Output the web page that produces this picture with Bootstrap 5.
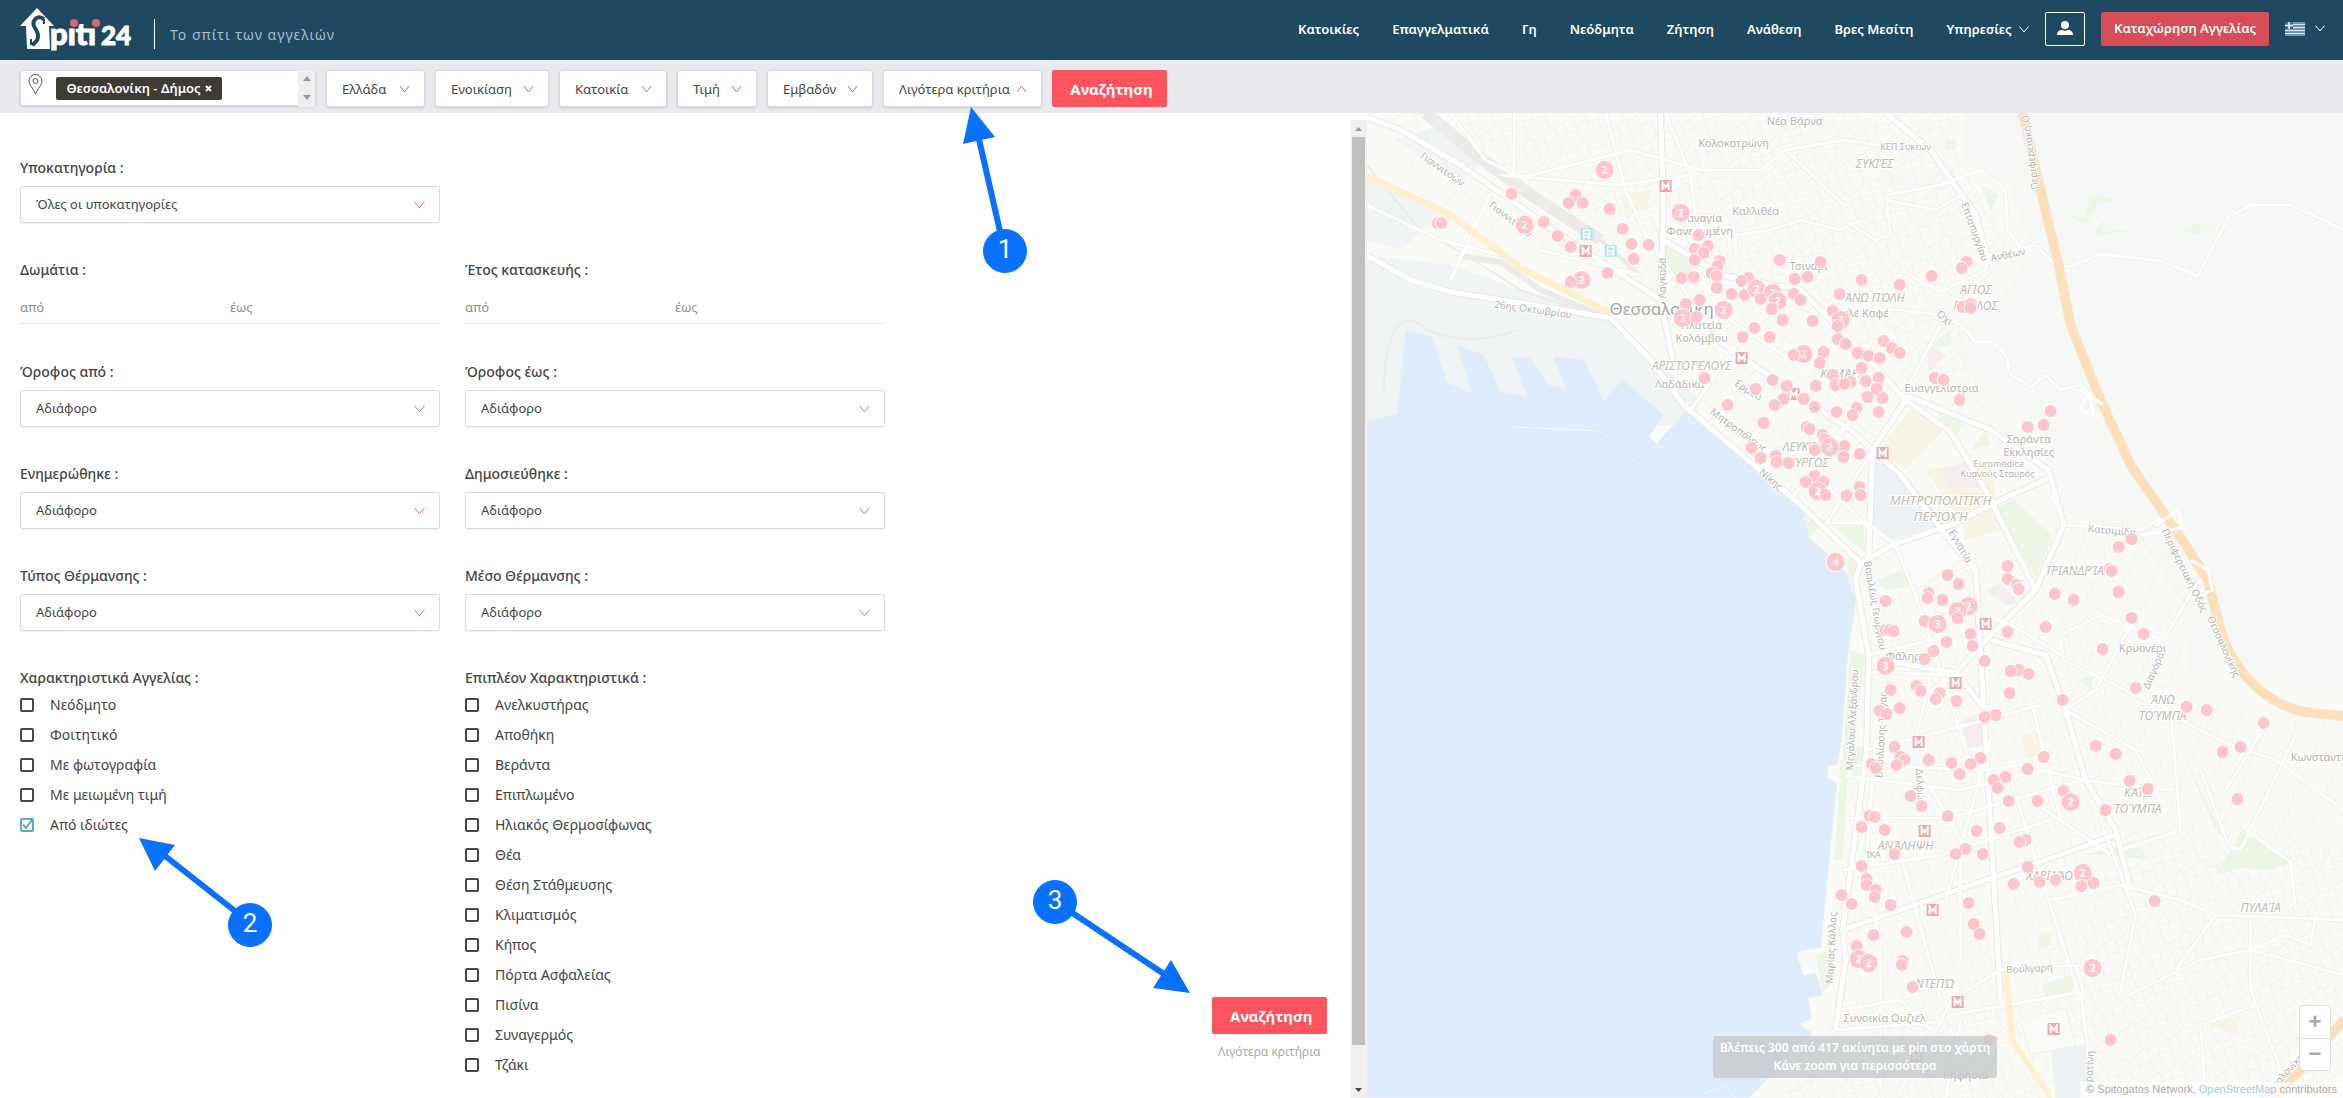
<!DOCTYPE html>
<html lang="el">
<head>
<meta charset="utf-8">
<meta name="viewport" content="width=device-width, initial-scale=1">
<title>Spiti24 - Το σπίτι των αγγελιών</title>
<link href="https://cdn.jsdelivr.net/npm/bootstrap@5.3.0/dist/css/bootstrap.min.css" rel="stylesheet">
<style>
body{font-family:"Noto Sans","Open Sans",sans-serif;font-size:13px;line-height:20px;color:#444;min-height:100vh}
.topbar{background:#1e4961;height:60px;padding:0 18px 0 20px}
.brand-logo{width:114px;height:60px;flex:none}
.tagline{border-left:1px solid #fff;height:30px;margin:8px 0 0 20px;padding:6px 0 0 15px;color:#a9bfce;font-size:14px;letter-spacing:1px}
.topnav{gap:33px}
.top-actions{padding-bottom:3px}
.topnav a{color:#fff;text-decoration:none;font-weight:600;white-space:nowrap}
.user-btn{width:40px;height:34px;border:1px solid #fff;border-radius:2px;padding:0;line-height:0}
.post-btn{height:34px;width:168px;padding:0;border-radius:2px;background:#d64d57;color:#fff;font-size:13px;font-weight:600}
.lang-btn{gap:10px}
.searchbar{background:#e9eaef;height:53px;padding:10px 20px 0;gap:10px}
.place-box{width:296px;height:36px;background:#fff;border:1px solid #d9dade;border-radius:3px;box-shadow:0 1px 3px #0002;padding-left:7px}
.place-chip{background:#3e3a36;color:#fff;border-radius:2px;height:23px;width:166px;font-weight:600;margin-left:13px}
.place-chip button{background:none;border:0;color:#fff;padding:0;font-size:12px;font-weight:700}
.place-spin{width:17px;height:37px;background:#f0f0f0}
.pill{height:37px;background:#fff;border:1px solid #d9dade;border-radius:3px;box-shadow:0 1px 3px #0002;color:#444;padding:0 14px 0 15px;white-space:nowrap}
.w-a{width:99px}.w-b{width:114px}.w-c{width:108px}.w-d{width:80px}.w-e{width:106px}.w-f{width:159px}
.go-btn{width:115px;height:37px;border:0;border-radius:2px;background:#ff545e;color:#fff;font-size:15px;font-weight:700;padding:0 0 0 4px}
.filters{padding:45px 24px 12px 20px}
.fcols{width:865px;column-gap:25px}
.fcol{width:420px}
.fgroup{height:102px}
.fgroup label,.fhead,.fgroup legend{font-size:14px;font-weight:500;line-height:20px;display:block;margin:0 0 8px;color:#444}
.fgroup .form-select{height:37px;font-size:13px;color:#444;border:1px solid #d9d9d9;border-radius:3px;padding:0 40px 0 15px;box-shadow:0 1px 2px #00000010;
 background-image:url("data:image/svg+xml,%3Csvg xmlns='http://www.w3.org/2000/svg' viewBox='0 0 11 8'%3E%3Cpath d='M.5.8 5.5 6.8 10.5.8' fill='none' stroke='%23de7280'/%3E%3C/svg%3E");background-size:11px 8px;background-position:right 14px center}
.range{border-bottom:1px solid #e4e4e4;height:36px}
.range input{border:0;width:50%;padding:3px 0 0;font-size:13px;color:#555;outline:0}
.range input::placeholder{color:#8a9190;opacity:1}
.fhead.fhead{margin:0 0 2px}
.tick{height:30px;gap:16px;padding:0;margin:0;min-height:0;font-size:14px}
.tick .form-check-input{width:14px;height:14px;margin:0;float:none;border:2px solid #484848;border-radius:2px;flex:none}
.tick .form-check-input:checked{background-color:#fff;border-color:#5ea9c6;background-size:12px;
 background-image:url("data:image/svg+xml,%3Csvg xmlns='http://www.w3.org/2000/svg' viewBox='0 0 12 12'%3E%3Cpath d='M2 5.5 5 9 11 1' fill='none' stroke='%235ea9c6' stroke-width='2'/%3E%3C/svg%3E")}
.less-link{color:#aaa;text-decoration:none;font-size:12px}
.rail{width:16px;background:#f0f0f0;margin-top:7px}
.rail-thumb{background:#c1c1c1;width:13px;flex:0 1 908px}
.rail svg{flex:none}
.map-side{min-height:980px;overflow:hidden;background:#fafaf7}
.map-svg{position:absolute;inset:0;width:100%;height:100%}
.map-note{position:absolute;right:346px;bottom:20px;width:284px;background:#c6c9cbcc;color:#fff;border-radius:3px;text-align:center;font-size:12px;font-weight:600;line-height:18px;padding:3px 0;white-space:nowrap}
.map-zoom{position:absolute;right:12px;bottom:27px;width:32px;height:66px;border:1px solid #ddd;border-radius:4px;background:#fff}
.map-zoom button{border:0;background:#fff;color:#aaa;font:700 22px/30px "Liberation Sans",sans-serif;flex:1;padding:0;border-radius:4px}
.map-zoom button+button{border-top:1px solid #ddd;border-radius:0 0 4px 4px}
.map-credit{position:absolute;right:0;bottom:0;background:#ffffffb3;color:#aaa;font-family:"Liberation Sans",sans-serif;font-size:11px;line-height:15px;padding:0 6px 1px}
.map-credit a{color:#9fcfe3;text-decoration:none}
.guide{position:absolute;left:0;top:0;width:1400px;height:1098px;pointer-events:none;z-index:5}
</style>
</head>
<body class="d-flex flex-column position-relative">
<header class="topbar d-flex align-items-center">
 <a href="#" class="brand-logo" aria-label="Spiti24">
 <svg width="114" height="60" viewBox="20 0 114 60">
  <path d="M20 26 37 8 54 26H49L50 49H27L26 26Z" fill="#fff"/>
  <path d="M44 19C36 14 31 22 35 28C39 34 40 40 32 45" fill="none" stroke="#1e4961" stroke-width="4"/>
  <path d="M44 19V24M31 39V45" stroke="#1e4961" stroke-width="2"/>
  <g fill="#fff" stroke="#fff" stroke-width="1" font-family="Lato" font-weight="900">
   <text x="50" y="45" font-size="31">pıtı</text><text x="101" y="45" font-size="26">24</text></g>
  <circle cx="74" cy="23" r="4" fill="#dc6672"/><circle cx="96" cy="23" r="4" fill="#dc6672"/>
 </svg></a>
 <div class="tagline">Το σπίτι των αγγελιών</div>
 <div class="top-actions d-flex align-items-center ms-auto">
 <nav class="topnav d-flex align-items-center">
  <a href="#">Κατοικίες</a><a href="#">Επαγγελματικά</a><a href="#">Γη</a><a href="#">Νεόδμητα</a><a href="#">Ζήτηση</a><a href="#">Ανάθεση</a><a href="#">Βρες Μεσίτη</a>
  <a href="#">Υπηρεσίες <svg class="ms-1" width="10" height="7" viewBox="0 0 10 7"><path d="M.5.5 5 6 9.500.5" fill="none" stroke="#fff"/></svg></a>
 </nav>
 <button class="btn user-btn ms-3" aria-label="Λογαριασμός"><svg width="16" height="15" viewBox="0 0 16 15" fill="#fff"><ellipse cx="8" cy="4" rx="4" ry="4"/><path d="M0 14C0 10 3 9 5 9C7 10 9 10 11 9C14 9 16 11 16 14Z"/></svg></button>
 <button class="btn post-btn ms-3">Καταχώρηση Αγγελίας</button>
 <button class="btn p-0 ms-3 border-0 d-flex align-items-center lang-btn" aria-label="Ελληνικά">
  <svg width="20" height="14" viewBox="0 0 20 14"><path fill="#dfe9f3" d="M0 0h20v14H0z"/><path d="M0 1h20M0 4h20M0 7h20M0 10h20M0 13h20" stroke="#4a77ae" stroke-width="1.500"/><path fill="#3566a4" d="M0 0h8v7H0z"/><path d="M4 0v7M0 3.500h8" stroke="#fff" stroke-width="1.500"/></svg>
  <svg width="10" height="7" viewBox="0 0 10 7"><path d="M.5.5 5 6 9.500.5" fill="none" stroke="#fff"/></svg>
 </button>
 </div>
</header>

<section class="searchbar d-flex">
 <div class="place-box d-flex align-items-center">
  <svg width="15" height="21" viewBox="0 0 15 21" class="mb-2"><path d="M7.500 20C5 14 1 11 1 7a6.500 6.500 0 0 1 13 0C14 11 10 14 7.500 20Z" fill="none" stroke="#555"/><circle cx="7.500" cy="7" r="2.500" fill="none" stroke="#555"/></svg>
  <span class="place-chip d-inline-flex align-items-center justify-content-center gap-1">Θεσσαλονίκη - Δήμος <button aria-label="Αφαίρεση"><svg width="7" height="7" viewBox="0 0 7 7"><path d="M1 1 6 6M6 1 1 6" stroke="#fff" stroke-width="2"/></svg></button></span>
  <span class="place-spin ms-auto d-flex flex-column justify-content-around align-items-center"><svg width="8" height="5"><path d="M0 5 4 0 8 5Z" fill="#999"/></svg><svg width="8" height="5"><path d="M0 0 4 5 8 0Z" fill="#999"/></svg></span>
 </div>
 <button class="pill w-a d-flex align-items-center justify-content-between">Ελλάδα <svg width="11" height="8"><path d="M1 1 5.500 7 10 1" fill="none" stroke="#e2606c"/></svg></button>
 <button class="pill w-b d-flex align-items-center justify-content-between">Ενοικίαση <svg width="11" height="8"><path d="M1 1 5.500 7 10 1" fill="none" stroke="#e2606c"/></svg></button>
 <button class="pill w-c d-flex align-items-center justify-content-between">Κατοικία <svg width="11" height="8"><path d="M1 1 5.500 7 10 1" fill="none" stroke="#e2606c"/></svg></button>
 <button class="pill w-d d-flex align-items-center justify-content-between">Τιμή <svg width="11" height="8"><path d="M1 1 5.500 7 10 1" fill="none" stroke="#e2606c"/></svg></button>
 <button class="pill w-e d-flex align-items-center justify-content-between">Εμβαδόν <svg width="11" height="8"><path d="M1 1 5.500 7 10 1" fill="none" stroke="#e2606c"/></svg></button>
 <button class="pill w-f d-flex align-items-center justify-content-between">Λιγότερα κριτήρια <svg width="11" height="8"><path d="M1 7 5.500 1 10 7" fill="none" stroke="#e2606c"/></svg></button>
 <button class="go-btn">Αναζήτηση</button>
</section>

<main class="row g-0 flex-grow-1">
 <div class="col-7 d-flex">
  <form class="filters d-flex flex-grow-1" onsubmit="return false">
   <div class="fcols d-flex flex-wrap align-content-start">
    <div class="fgroup w-100"><div class="fcol"><label for="s0">Υποκατηγορία :</label><select id="s0" class="form-select"><option>Όλες οι υποκατηγορίες</option></select></div></div>
    <fieldset class="fgroup fcol"><legend>Δωμάτια :</legend><div class="range d-flex"><input placeholder="από" aria-label="Δωμάτια από"><input placeholder="έως" aria-label="Δωμάτια έως"></div></fieldset>
    <fieldset class="fgroup fcol"><legend>Έτος κατασκευής :</legend><div class="range d-flex"><input placeholder="από" aria-label="Έτος από"><input placeholder="έως" aria-label="Έτος έως"></div></fieldset>
    <div class="fgroup fcol"><label for="s1">Όροφος από :</label><select id="s1" class="form-select"><option>Αδιάφορο</option></select></div>
    <div class="fgroup fcol"><label for="s2">Όροφος έως :</label><select id="s2" class="form-select"><option>Αδιάφορο</option></select></div>
    <div class="fgroup fcol"><label for="s3">Ενημερώθηκε :</label><select id="s3" class="form-select"><option>Αδιάφορο</option></select></div>
    <div class="fgroup fcol"><label for="s4">Δημοσιεύθηκε :</label><select id="s4" class="form-select"><option>Αδιάφορο</option></select></div>
    <div class="fgroup fcol"><label for="s5">Τύπος Θέρμανσης :</label><select id="s5" class="form-select"><option>Αδιάφορο</option></select></div>
    <div class="fgroup fcol"><label for="s6">Μέσο Θέρμανσης :</label><select id="s6" class="form-select"><option>Αδιάφορο</option></select></div>
    <div class="fcol"><p class="fhead">Χαρακτηριστικά Αγγελίας :</p>
     <div class="form-check tick d-flex align-items-center"><input class="form-check-input" type="checkbox" id="a1"><label for="a1">Νεόδμητο</label></div>
     <div class="form-check tick d-flex align-items-center"><input class="form-check-input" type="checkbox" id="a2"><label for="a2">Φοιτητικό</label></div>
     <div class="form-check tick d-flex align-items-center"><input class="form-check-input" type="checkbox" id="a3"><label for="a3">Με φωτογραφία</label></div>
     <div class="form-check tick d-flex align-items-center"><input class="form-check-input" type="checkbox" id="a4"><label for="a4">Με μειωμένη τιμή</label></div>
     <div class="form-check tick d-flex align-items-center"><input class="form-check-input" type="checkbox" id="a5" checked><label for="a5">Από ιδιώτες</label></div>
    </div>
    <div class="fcol"><p class="fhead">Επιπλέον Χαρακτηριστικά :</p>
     <div class="form-check tick d-flex align-items-center"><input class="form-check-input" type="checkbox" id="b1"><label for="b1">Ανελκυστήρας</label></div>
     <div class="form-check tick d-flex align-items-center"><input class="form-check-input" type="checkbox" id="b2"><label for="b2">Αποθήκη</label></div>
     <div class="form-check tick d-flex align-items-center"><input class="form-check-input" type="checkbox" id="b3"><label for="b3">Βεράντα</label></div>
     <div class="form-check tick d-flex align-items-center"><input class="form-check-input" type="checkbox" id="b4"><label for="b4">Επιπλωμένο</label></div>
     <div class="form-check tick d-flex align-items-center"><input class="form-check-input" type="checkbox" id="b5"><label for="b5">Ηλιακός Θερμοσίφωνας</label></div>
     <div class="form-check tick d-flex align-items-center"><input class="form-check-input" type="checkbox" id="b6"><label for="b6">Θέα</label></div>
     <div class="form-check tick d-flex align-items-center"><input class="form-check-input" type="checkbox" id="b7"><label for="b7">Θέση Στάθμευσης</label></div>
     <div class="form-check tick d-flex align-items-center"><input class="form-check-input" type="checkbox" id="b8"><label for="b8">Κλιματισμός</label></div>
     <div class="form-check tick d-flex align-items-center"><input class="form-check-input" type="checkbox" id="b9"><label for="b9">Κήπος</label></div>
     <div class="form-check tick d-flex align-items-center"><input class="form-check-input" type="checkbox" id="b10"><label for="b10">Πόρτα Ασφαλείας</label></div>
     <div class="form-check tick d-flex align-items-center"><input class="form-check-input" type="checkbox" id="b11"><label for="b11">Πισίνα</label></div>
     <div class="form-check tick d-flex align-items-center"><input class="form-check-input" type="checkbox" id="b12"><label for="b12">Συναγερμός</label></div>
     <div class="form-check tick d-flex align-items-center"><input class="form-check-input" type="checkbox" id="b13"><label for="b13">Τζάκι</label></div>
    </div>
   </div>
   <div class="ms-auto align-self-end text-center pb-4 d-flex flex-column gap-2">
    <button class="go-btn">Αναζήτηση</button><a href="#" class="less-link">Λιγότερα κριτήρια</a>
   </div>
  </form>
  <div class="rail d-flex flex-column align-items-center justify-content-between flex-shrink-0">
   <svg width="15" height="17"><path d="M4 11 7.500 7 11 11Z" fill="#999"/></svg>
   <div class="rail-thumb"></div><div class="flex-grow-1"></div>
   <svg width="15" height="17"><path d="M4 7 7.500 11 11 7Z" fill="#444"/></svg>
  </div>
 </div>

 <div class="col-5 map-side position-relative">
 <svg class="map-svg" viewBox="1366 113 977 985" preserveAspectRatio="xMidYMid slice" font-family="Noto Sans">
  <defs>
   <pattern id="g1" width="17" height="12" patternUnits="userSpaceOnUse" patternTransform="rotate(32)"><path d="M0 0H17M0 0V12M9 0V7" fill="none" stroke="#f2f2ee"/></pattern>
   <pattern id="g2" width="19" height="13" patternUnits="userSpaceOnUse" patternTransform="rotate(-14)"><path d="M0 0H19M0 0V13M8 4V13" fill="none" stroke="#f2f2ee"/></pattern>
   <pattern id="g3" width="27" height="11" patternUnits="userSpaceOnUse" patternTransform="rotate(24)"><path d="M0 0H27M0 0V11M14 0 18 11" fill="none" stroke="#f2f2ee"/></pattern>
   <pattern id="g4" width="28" height="23" patternUnits="userSpaceOnUse" patternTransform="rotate(62)"><path d="M0 0 28 4M0 0 4 23M15 2 10 23M4 12 20 16" fill="none" stroke="#f1f1ed"/></pattern>
   <g id="metro"><rect x="-6" y="-6" width="12" height="12" fill="#eaabaf"/><path d="M-3 4V-3L0 1 3-3V4" fill="none" stroke="#fff" stroke-width="2"/></g>
   <g id="train"><rect x="-6" y="-6" width="12" height="12" fill="#b5e0f7"/><path d="M-3-4H3V3H-3ZM-3 0H3M-3 5-1 3M3 5 1 3" fill="none" stroke="#fff" stroke-width="1.500"/></g>
  </defs>
  <path fill="#fafbf7" d="M1366 113H2343V1098H1366Z"/>
  <!-- hills -->
  <path fill="#f5f8f4" d="M1962 113H2343V695L2290 690 2230 665 2188 672 2180 600 2140 540 2060 510 2050 470 2035 420 2000 405 1965 370 1950 340 2000 300 2030 250 2010 185 1965 160Z"/>
  <path fill="#f5f8f4" d="M1870 180 1905 170 1950 165 1960 190 1890 190Z"/>
  <!-- docks -->
  <path fill="#f0f4f4" d="M1366 255 1450 265 1520 290 1610 315 1700 400 1690 425 1366 425ZM1366 175 1440 215 1400 250 1366 240ZM1395 140 1440 125 1480 165 1460 180Z"/>
  <!-- street texture -->
  <path fill="url(#g4)" d="M1366 113H1960L1960 165 2020 260 1950 300 1980 400 1720 270 1640 230 1480 170Z"/>
  <path fill="url(#g1)" d="M1420 150 1640 235 1980 400 2030 440 1860 620 1800 500 1620 320 1560 260 1380 190Z"/>
  <path fill="url(#g2)" d="M1870 590 1990 560 2100 650 2140 980 1960 1030 1828 1030 1850 760Z"/>
  <path fill="url(#g3)" d="M2010 560 2080 510 2190 520 2180 700 2343 720V880L2130 820 2050 720Z"/>
  <path fill="url(#g4)" d="M2120 830 2343 850V1098H1780L1830 1025 2060 1000Z"/>
  <!-- parks and squares -->
  <g fill="#edf5e6">
   <path d="M1803 512 1827 521 1808 537ZM1828 524H1862L1865 553ZM1845 563 1857 550 1862 573 1850 585ZM1995 508 2013 500 2052 535 2035 579ZM1930 345 1952 328 1947 347ZM1930 400 1965 425 1950 440ZM1850 650 1865 655 1850 760 1842 760ZM1841 745 1865 748 1855 780ZM1815 955 1830 950 1835 980 1822 992Z"/>
   <path d="M2066 215 2082 218 2093 193 2113 200 2098 204 2085 224ZM2093 236 2102 220 2105 229 2130 231ZM2185 230 2195 223 2218 225 2202 228 2196 235ZM2215 875 2242 828 2292 862 2270 870 2240 868ZM2180 750 2228 845 2215 830ZM2083 855 2135 840 2148 860 2110 855ZM2038 935 2052 930 2050 945 2038 950ZM2042 985 2078 972 2070 995 2045 998ZM2080 680 2095 672 2090 690ZM1985 430 1970 450 1990 445Z"/>
   <path d="M1655 225 1675 250 1695 265 1680 290 1662 260ZM1980 185 1998 195 1990 212ZM1945 140 1955 140V150H1945ZM1875 580 1908 568 1910 587 1885 590ZM1840 760 1848 760 1842 860 1834 860Z"/>
  </g>
  <path fill="#f7f3e5" d="M1913 405 1948 425 1905 470 1878 450ZM1925 470 1990 460 1995 500 1965 525 1945 500ZM1960 510 1995 510 2000 530 1965 540ZM2022 735 2038 730 2040 755 2025 758ZM2210 1025 2240 1015 2235 1035ZM1620 195 1650 190 1645 210 1625 215Z"/>
  <path fill="#eef2f5" d="M1873 455 1905 475 1945 525 1890 540 1868 520ZM2050 1048 2090 1045 2085 1098H2055Z"/>
  <path fill="#f5edf0" d="M1925 343 1946 355 1928 372ZM1940 470 1970 460 1985 488 1950 488ZM1985 590 2000 583 2018 603 2005 605ZM1960 720 1984 712 1987 745 1968 748Z"/>
  <path fill="#fbfbfa" stroke="#f0f0ee" d="M1890 545 1945 525 1970 555 1915 590ZM2020 1020 2065 1008 2075 1045 2030 1055Z"/>
  <!-- sea -->
  <path fill="#dfecfe" stroke="#eceff0" d="M1366 421 1397 414 1405 330 1431 337 1447 384 1471 393 1457 346 1483 355 1500 392 1527 397 1512 357 1530 358 1547 385 1566 389 1553 357 1584 360 1603 401 1622 380 1663 415 1648 437 1656 444 1685 412 1743 460 1803 510 1808 538 1840 565 1847 577 1855 600 1847 655 1841 740 1836 765H1827V778L1836 783 1820 947 1795 952 1803 976 1815 973 1822 995 1807 998 1811 1018 1798 1024 1811 1033 1748 1098H1366Z"/>
  <path fill="none" stroke="#f4f8fe" d="M1512 427 1600 431 1640 466M1700 1095 1725 1085 1735 1098"/>
  <!-- rail tracks -->
  <g fill="none" stroke="#ecebea">
   <path stroke-width="12" d="M1425 113 1480 158 1530 195 1600 240"/>
   <path stroke-width="4" d="M1600 240 1640 275"/>
   <path stroke-width="2" d="M1366 165 1420 230 1465 255 1520 290 1600 318M1455 255 1500 262 1530 285 1605 315M1383 390C1385 330 1400 310 1420 325S1480 345 1515 330"/>
   <path stroke-width="6" d="M1460 256 1500 262 1540 290 1600 316"/>
  </g>
  <!-- road casings and fills -->
  <g fill="none" stroke-linejoin="round" id="roads"></g>
  <g fill="none" stroke-linejoin="round">
   <path stroke="#fdf0cf" stroke-width="7" d="M1366 176 1450 215 1520 268 1610 313"/>
   <path stroke="#fdf0cf" stroke-width="6" d="M2005 970 2012 1040 2050 1098"/>
   <path stroke="#fae5cd" stroke-width="10" d="M2022 113 2040 190 2058 265 2070 325 2100 400 2130 465 2185 545 2207 580 2220 630C2232 670 2265 705 2305 712L2343 716M2343 1020 2300 1070 2272 1098"/>
   <path stroke="#fde0bb" stroke-width="8" d="M2022 113 2040 190 2058 265 2070 325 2100 400 2130 465 2185 545 2207 580 2220 630C2232 670 2265 705 2305 712L2343 716M2343 1020 2300 1070 2272 1098"/>
   <path stroke="#fff" stroke-width="3" d="M2155 525 2178 510 2182 528 2140 535M2190 560 2207 570 2212 590 2190 600M2080 390 2103 405M2088 392 2080 410 2093 415Z"/>
  </g>
  <!-- place names -->
  <g fill="#b5b4b0" font-size="11" text-anchor="middle" stroke="#fff" stroke-width="2" paint-order="stroke">
   <text x="1794" y="125">Νέα Βάρνα</text><text x="1733" y="147">Κολοκοτρώνη</text><text x="1755" y="215">Καλλιθέα</text>
   <text x="1700" y="222">Παναγία</text><text x="1699" y="235">Φανερωμένη</text><text x="1905" y="150" font-size="9">ΚΕΠ Συκεών</text>
   <text x="1701" y="329">Πλατεία</text><text x="1701" y="342">Κολόμβου</text><text x="1679" y="388">Λαδάδικα</text><text x="1808" y="270">Τσινάρι</text>
   <text x="1858" y="317">Κουλέ Καφέ</text><text x="1941" y="392">Ευαγγελίστρια</text><text x="2028" y="443">Σαράντα</text><text x="2028" y="456">Εκκλησίες</text>
   <text x="1998" y="467" font-size="9">Euromedica</text><text x="1997" y="477" font-size="9">Κυανούς Σταυρός</text>
   <text x="1906" y="660">Φάληρο</text><text x="2142" y="652">Κρυονέρι</text><text x="2320" y="761">Κωνσταντιν</text>
   <text x="1873" y="858" font-size="9">ΙΚΑ</text><text x="1884" y="1022">Συνοικία Ουζιέλ</text><text x="1965" y="1079">Κηφησιά</text>
   <text x="1661" y="315" font-size="17" fill="#a5a5a3">Θεσσαλονίκη</text>
   <g font-style="italic" font-size="12" fill="#bebbb5">
    <text x="1874" y="168">ΣΥΚΙΈΣ</text><text x="1691" y="370">ΑΡΙΣΤΟΤΈΛΟΥΣ</text><text x="1874" y="302">ΆΝΩ ΠΌΛΗ</text><text x="1975" y="294">ΆΓΙΟΣ</text><text x="1975" y="310">ΠΑΎΛΟΣ</text><text x="1842" y="378">ΚΑΜΆΡΑ</text>
    <text x="1803" y="451">ΛΕΥΚΌΣ</text><text x="1806" y="467">ΠΎΡΓΟΣ</text><text x="1940" y="505" font-size="13">ΜΗΤΡΟΠΟΛΙΤΙΚΉ</text><text x="1940" y="521" font-size="13">ΠΕΡΙΟΧΉ</text>
    <text x="2074" y="575">ΤΡΙΑΝΔΡΊΑ</text><text x="2162" y="704">ΆΝΩ</text><text x="2162" y="720">ΤΟΎΜΠΑ</text><text x="2137" y="797">ΚΆΤΩ</text><text x="2137" y="813">ΤΟΎΜΠΑ</text>
    <text x="1905" y="850">ΑΝΆΛΗΨΗ</text><text x="2052" y="880">ΧΑΡΙΛΆΟΥ</text><text x="2260" y="912">ΠΥΛΑΊΑ</text><text x="1934" y="988">ΝΤΕΠΏ</text>
   </g>
   <g font-size="10">
    <text transform="translate(1440 172) rotate(35)">Γιαννιτσών</text><text transform="translate(1508 222) rotate(38)">Γιαννιτσών</text><text transform="translate(1532 313) rotate(8)">26ης Οκτωβρίου</text>
    <text transform="translate(1665 278) rotate(-90)">Λαγκαδά</text><text transform="translate(1746 393) rotate(32)">Ερμού</text><text transform="translate(1736 433) rotate(36)">Μητροπόλεως</text><text transform="translate(1768 482) rotate(42)">Νίκης</text>
    <text transform="translate(1971 233) rotate(70)">Επταπυργίου</text><text transform="translate(2008 258) rotate(-12)">Ανθέων</text><text transform="translate(1942 320) rotate(35)">Όχι</text>
    <text transform="translate(2033 152) rotate(-98)">Περιφερειακή Ο</text><text transform="translate(1957 548) rotate(60)">Εγνατία</text><text transform="translate(2111 534) rotate(5)">Κατσιμίδη</text>
    <text transform="translate(1871 606) rotate(80)">Βασιλέως Γεωργίου</text><text transform="translate(1855 720) rotate(-87)">Μεγάλου Αλεξάνδρου</text><text transform="translate(1884 735) rotate(-87)">Βασιλίσσης Όλγας</text>
    <text transform="translate(2181 572) rotate(64)">Περιφερειακή Οδός</text><text transform="translate(2220 648) rotate(66)">Θεσσαλονίκης</text><text transform="translate(2156 672) rotate(-66)">Διαγόρα</text>
    <text transform="translate(1916 787) rotate(88)">Δελφών</text><text transform="translate(1834 948) rotate(-87)">Μαρίας Κάλλας</text><text transform="translate(2029 972) rotate(-3)">Βούλγαρη</text><text transform="translate(2092 1072) rotate(-87)">Στρατίνη</text><text transform="translate(2285 1078) rotate(-48)">Θεσσαλονίκης</text>
   </g>
  </g>
  <use href="#train" x="1586" y="234"/><use href="#train" x="1610" y="251"/>
  <g id="stations"></g>
  <g id="pins" font-size="10" font-weight="700" text-anchor="middle"></g>
 </svg>
 <div class="map-note">Βλέπεις 300 από 417 ακίνητα με pin στο χάρτη<br>Κάνε zoom για περισσότερα</div>
 <div class="map-zoom d-flex flex-column"><button aria-label="Μεγέθυνση">+</button><button aria-label="Σμίκρυνση">−</button></div>
 <div class="map-credit">© Spitogatos Network, <a href="#">OpenStreetMap</a> contributors</div>
 </div>
</main>

<svg class="guide" viewBox="0 0 1400 1098" fill="#0a70ff" stroke="#0a70ff" aria-hidden="true">
 <path stroke-width="6" d="M1002 240 978 135M240 915 160 852M1065 908 1170 978"/>
 <path stroke="none" d="M971 107 963 144 995 137ZM139 838 175 845 155 871ZM1190 993 1171 960 1153 988Z"/>
 <circle cx="1005" cy="251" r="21.500"/><circle cx="250" cy="925" r="21.500"/><circle cx="1055" cy="902" r="21.500"/>
 <g fill="#fff" stroke="none" font-family="Roboto" font-size="26" text-anchor="middle"><text x="1005" y="258">1</text><text x="250" y="932">2</text><text x="1055" y="909">3</text></g>
</svg>
<script src="https://cdn.jsdelivr.net/npm/bootstrap@5.3.0/dist/js/bootstrap.bundle.min.js"></script>
<script>
const NS='http://www.w3.org/2000/svg';
function add(parent,tag,attrs,text){const e=document.createElementNS(NS,tag);for(const k in attrs)e.setAttribute(k,attrs[k]);if(text)e.textContent=text;parent.appendChild(e);}
const $=id=>document.getElementById(id);
const major=[
 'M1366 117 1400 130 1460 165 1560 235 1660 300 1760 370 1850 430 1872 450','M1366 255 1410 280 1450 292 1520 303 1610 318 1650 360 1683 405 1800 505 1860 563 1855 580 1868 655 1866 750 1842 930 1845 960 1835 1030',
 'M1660 113 1663 210 1660 300 1672 360','M1663 240 1720 275 1800 290 1850 340 1905 400 1950 432 1985 490 2035 590','M1885 113 1930 150 1975 215 1988 260',
 'M1872 450 1868 560','M1872 450 1900 475 1945 535 1975 570 1985 740 2000 1000','M1905 400 1872 450','M1860 563 1892 545 1950 525 2000 500 2048 478','M1905 395 1990 430 2048 470 2063 525 2035 590 1985 640 1955 673 1920 700','M1880 660 1955 673 1985 710','M1990 640 2045 655 2065 710 2085 780 2115 830 2130 890','M1842 930 1985 880 2045 860 2115 835'];
const minor=[
 'M1450 113 1485 160 1520 178 1630 150 1700 170 1760 170 1785 150 1843 140 1910 150','M1605 113 1625 190 1645 235 1690 300','M1366 205 1440 240 1500 255','M1490 193 1450 280','M1500 175 1620 185 1690 175','M1665 113 1690 175 1697 230 1720 275','M1540 250 1640 275','M1514 113 1513 175','M1843 220 1875 240 1890 235 1885 195 1940 185 1980 170 2005 190 2007 230 2025 255','M1885 200 1935 210 1960 195','M1735 255 1735 235 1770 230 1800 220 1840 230 1860 220','M1785 150 1843 205','M1900 270 1940 292 1985 270 1988 255 2035 245','M1843 310 1900 310 1940 315 1960 325 1975 342 1990 342 2005 355 2010 375 2030 387 2045 375 2060 390 2080 385 2100 405','M1940 325 1900 400','M2035 245 2055 265 2068 267 2100 254 2160 261 2197 276 2228 217 2250 205 2290 205 2343 230',
 'M1700 300 1790 360 1840 400','M1740 340 1690 410','M1800 380 1750 440','M1850 420 1790 500','M1872 450 1825 525','M1825 523H1868','M1830 490 1870 530','M1868 525 1895 545 1913 590 1935 655 1975 780','M1920 590 1975 565','M1868 655 1930 640','M1868 672 1960 675','M1935 655 1915 740','M1985 615 2020 630 2060 655','M2063 525 2140 530 2165 515','M2065 525 2050 495','M2060 635 2100 615 2163 640 2195 585 2207 575','M2130 625 2095 690 2065 710','M2060 640 2063 660 2135 695 2170 710 2180 830 2120 850','M2065 710 2135 750 2160 800','M2170 715 2230 745 2275 760 2343 810','M2295 735 2240 850 2228 845 2200 770','M2265 725 2225 790','M1866 750 1985 720 2040 705','M1850 765 1985 770 2060 760','M1845 776 1960 790 2040 770 2085 780','M1850 818 1950 818 2080 780 2170 790','M1842 870 1940 855 2050 820','M1875 740 1865 870','M1920 770 1960 840 1960 960','M1990 740 1945 900','M2010 780 2080 1000','M2030 800 2110 855','M2050 900 2120 885 2180 900 2215 915 2343 920','M2100 820 2135 915 2120 990','M2250 920 2250 990 2290 1098','M2128 995 2200 960 2250 950 2343 975','M2250 950 2285 935 2310 945 2315 915','M2200 1025 2255 1005 2200 1025 2205 1098','M1950 1015 2080 992 2090 1070','M1835 1030 1940 1022 1950 1000 2000 970 2080 965','M1860 860 1880 940 1880 1090','M1900 855 1940 1000','M1940 1022 1900 1090','M1960 1020 1945 1098','M2075 965 2085 1000','M2243 828 2290 862 2295 910','M1890 690 1860 850','M2030 700 2060 820','M1840 1010 1900 1000 1930 1030','M2215 915 2175 970'];
const R=$('roads');
minor.forEach(d=>add(R,'path',{d,stroke:'#ecebe8','stroke-width':4}));
major.forEach(d=>add(R,'path',{d,stroke:'#e9e8e5','stroke-width':7}));
minor.forEach(d=>add(R,'path',{d,stroke:'#fff','stroke-width':3}));
major.forEach(d=>add(R,'path',{d,stroke:'#fff','stroke-width':5}));
[[1665,186],[1585,251],[1741,358],[1793,394],[1882,453],[1985,624],[1955,683],[1918,742],[1924,831],[1932,910],[1957,1002],[2053,1029],[1916,1056]].forEach(([x,y])=>add($('stations'),'use',{href:'#metro',x,y}));
const P='1511,194 1575,195 1568,203 1582,203 1609,209 1622,229 1631,244 1648,245 1633,259 1543,222 1557,236 1570,247 1437,223 1441,223 1607,273 1698,235 1694,249 1707,246 1703,253 1694,260 1719,261 1717,266 1711,273 1716,276 1681,278 1693,277 1716,288 1731,294 1744,295 1748,278 1741,281 1779,260 1820,262 1794,279 1807,277 1793,294 1800,300 1699,300 1685,304 1782,320 1812,321 1754,328 1742,337 1769,337 1839,294 1832,311 1837,339 1845,344 1857,353 1823,352 1819,363 1832,375 1835,385 1850,382 1844,384 1772,380 1786,386 1755,389 1815,386 1783,399 1774,405 1803,399 1814,407 1836,412 1856,408 1852,415 1704,378 1727,405 1763,423 1806,427 1809,429 1822,435 1824,439 1844,446 1843,457 1751,448 1760,458 1861,280 1899,285 1931,276 1966,262 1961,268 1962,307 1970,304 1970,308 1868,356 1879,358 1883,341 1891,348 1899,353 1861,368 1865,381 1878,378 1876,389 1867,397 1882,398 1878,412 1934,378 1943,380 1959,400 2050,411 2043,425 2027,427 1859,454 1775,456 1776,462 1788,463 1814,476 1805,482 1823,482 1846,496 1859,487 1860,495 1947,575 1958,584 1928,593 1927,598 1942,600 1885,601 1924,621 1885,630 1889,630 1893,631 1946,642 1970,634 1972,646 1933,651 1924,659 2007,566 2007,579 2016,585 2018,589 2054,594 2045,627 2007,632 1984,661 2018,670 2010,671 2028,674 2009,693 1890,690 1916,686 1920,691 1939,693 1935,699 1956,701 1879,711 1886,714 1899,708 1995,715 1984,717 1894,747 2131,539 2118,547 2109,569 2111,571 2118,592 2073,600 2131,618 2143,634 2102,649 2135,688 2186,707 2206,710 2263,723 2240,747 2222,752 2062,700 2095,746 2115,754 2129,781 2147,789 2237,799 2043,757 2027,769 1980,758 1970,764 1951,763 1959,774 2005,777 1993,780 1997,788 2008,801 2063,791 2037,801 1900,757 1904,760 1896,765 1928,760 1871,764 1875,768 1910,796 1921,806 1869,816 1874,817 1861,827 1884,830 1947,816 1976,831 1999,828 2105,810 2025,840 2019,842 1965,849 1955,854 1982,854 1894,854 1861,866 1866,879 1866,885 1875,890 1874,897 1841,895 1851,904 1890,905 2027,867 2013,884 2039,882 2055,880 2154,901 1968,903 1973,924 1979,934 1906,932 1873,935 1856,946 1902,961 1901,965 1912,987 2110,1040 1988,1040';
const C=[[1604,170,2],[1524,225,2],[1680,213,2],[1581,280,2],[1756,289,2],[1772,293,2],[1777,301,2],[1723,310,2],[1682,318,2],[1840,320,2],[1803,354,2],[1829,447,2],[1817,491,2],[1835,562,4],[1968,606,2],[1957,611,2],[1937,624,3],[1885,666,3],[2070,802,2],[2082,873,2],[1858,959,2],[1868,963,2],[2092,968,2]];
const pin=(cx,cy,r)=>add($('pins'),'circle',{cx,cy,r,fill:'#ffc5cc',stroke:'#fff'});
const dots=s=>s.split(' ').forEach(p=>pin(...p.split(','),6.5));
dots(P);
C.forEach(([x,y,n])=>{pin(x,y,9.5);add($('pins'),'text',{x,y:y+4,fill:'#fff'},String(n));});
dots('1570,282 1760,299 1771,309 1696,317 1837,326 1793,355 1814,450 1825,495 1957,618 2081,886 2093,883');
</script>
</body>
</html>
